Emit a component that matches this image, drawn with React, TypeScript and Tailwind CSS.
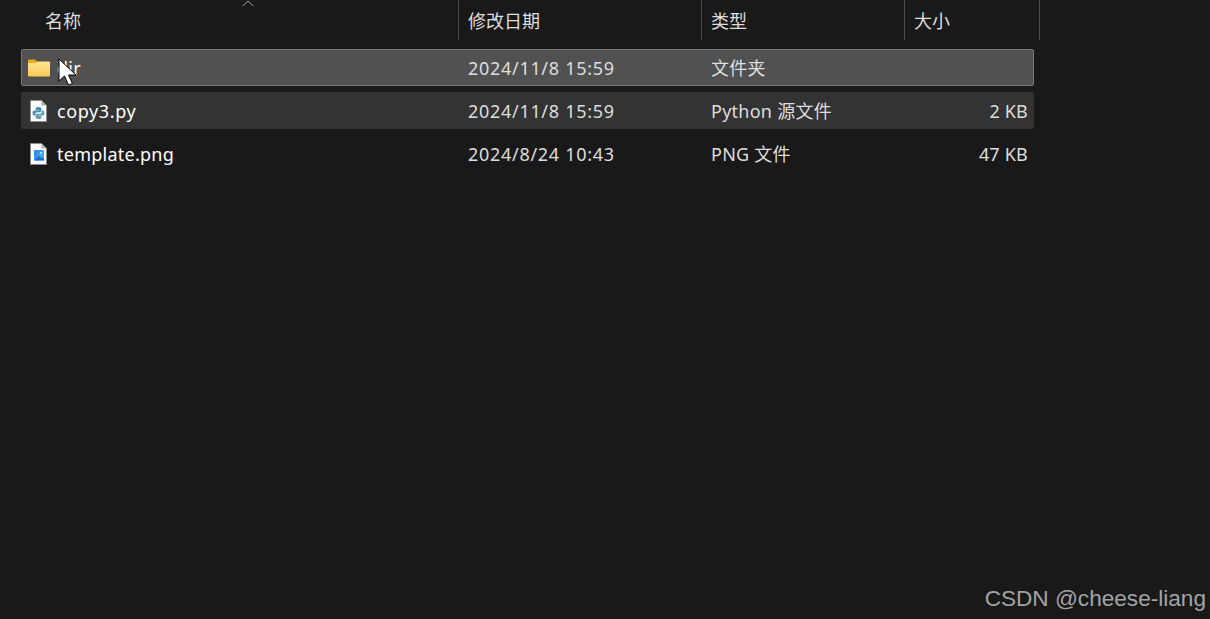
import React from "react";

const font = { fontFamily: '"Noto Sans", "Noto Sans CJK SC", sans-serif' };

function FolderIcon() {
  return (
    <svg width="22" height="18" viewBox="0 0 22 18" className="shrink-0">
      <defs>
        <linearGradient id="folderGrad" x1="0" y1="0" x2="0" y2="1">
          <stop offset="0" stopColor="#ffe69a" />
          <stop offset="1" stopColor="#fcc953" />
        </linearGradient>
      </defs>
      <path d="M0 1.5 Q0 0.5 1 0.5 H6 Q7 0.5 8 1.5 L9.5 2.5 H21 Q22 2.5 22 3.5 V8 H0 Z" fill="#f0a810" />
      <path d="M0 4 H7.5 L9.5 2.8 H21 Q22 2.8 22 3.8 V16.5 Q22 17.5 21 17.5 H1 Q0 17.5 0 16.5 Z" fill="url(#folderGrad)" />
    </svg>
  );
}

function PageIcon({ children }: { children: React.ReactNode }) {
  return (
    <svg width="17" height="22" viewBox="0 0 17 22" className="shrink-0">
      <path d="M0.5 0.5 H11.5 L16.5 5.5 V21.5 H0.5 Z" fill="#fbfbfb" stroke="#8c8c8c" strokeWidth="1" />
      <path d="M11.5 0.5 V5.5 H16.5 Z" fill="#b0b0b0" />
      {children}
    </svg>
  );
}

function PythonIcon() {
  return (
    <PageIcon>
      <path d="M8.4 7 C6.4 7 5.6 7.7 5.6 8.8 V10 H8.6 V10.6 H4.4 C3.2 10.6 2.6 11.6 2.6 13 C2.6 14.4 3.2 15.4 4.3 15.4 H5.3 V14 C5.3 12.9 6.2 12.2 7.2 12.2 H9.8 C10.8 12.2 11.4 11.5 11.4 10.6 V8.8 C11.4 7.7 10.4 7 8.4 7 Z" fill="#4f8cab" />
      <path d="M8.6 19 C10.6 19 11.4 18.3 11.4 17.2 V16 H8.4 V15.4 H12.6 C13.8 15.4 14.4 14.4 14.4 13 C14.4 11.6 13.8 10.6 12.7 10.6 H11.9 V12 C11.9 13.1 10.9 13.8 9.8 13.8 H7.2 C6.2 13.8 5.6 14.5 5.6 15.4 V17.2 C5.6 18.3 6.6 19 8.6 19 Z" fill="#5f9dbb" />
    </PageIcon>
  );
}

function PngIcon() {
  return (
    <PageIcon>
      <defs>
        <linearGradient id="pngGrad" x1="0" y1="0" x2="1" y2="1">
          <stop offset="0" stopColor="#2a7fe0" />
          <stop offset="1" stopColor="#56bdf7" />
        </linearGradient>
      </defs>
      <rect x="4" y="7" width="10" height="10.5" rx="0.8" fill="url(#pngGrad)" />
      <path d="M4 17.5 L8.5 12.5 L11 15 L12 14.2 L14 16 V17.5 Z" fill="#1a6fd0" />
      <circle cx="11" cy="9.8" r="1.1" fill="#cfeaff" />
    </PageIcon>
  );
}

function Cursor() {
  return (
    <svg width="22" height="30" viewBox="0 0 22 30" className="absolute left-[58px] top-[58px]">
      <path d="M1 1 V23 L6.5 18 L10.5 27 L14.5 25.5 L10.5 17 H18 Z" fill="#ffffff" stroke="#000000" strokeWidth="1" />
    </svg>
  );
}

const rows = [
  { icon: <FolderIcon />, name: "dir", date: "2024/11/8 15:59", type: "文件夹", size: "", bg: "bg-[#515151] border border-[#777777]", iconCls: "ml-[6px]", gap: "ml-[7px] tracking-[0.3px]", nameW: "w-[446px]", sizeP: "pr-[5px]" },
  { icon: <PythonIcon />, name: "copy3.py", date: "2024/11/8 15:59", type: "Python 源文件", size: "2 KB", bg: "bg-[#333333]", iconCls: "ml-[9px]", gap: "ml-[10px] tracking-[0.6px]", nameW: "w-[447px]", sizeP: "pr-[6px]" },
  { icon: <PngIcon />, name: "template.png", date: "2024/8/24 10:43", type: "PNG 文件", size: "47 KB", bg: "", iconCls: "ml-[9px]", gap: "ml-[10px] tracking-[0.25px]", nameW: "w-[447px]", sizeP: "pr-[6px]" },
];

export default function App() {
  return (
    <div className="relative h-[619px] w-[1210px] overflow-hidden bg-[#191919] text-[18px] text-[#dedede]" style={font}>
      <div className="flex h-10">
        <div className="relative flex w-[459px] items-center border-r border-[#4d4d4d] pl-[45px] pt-[2px]">
          名称
          <svg width="12" height="7" viewBox="0 0 12 7" className="absolute left-[242px] top-0">
            <path d="M0.5 6 L6 1 L11.5 6" fill="none" stroke="#9a9a9a" strokeWidth="1" />
          </svg>
        </div>
        <div className="flex w-[243px] items-center border-r border-[#4d4d4d] pl-[9px] pt-[2px]">修改日期</div>
        <div className="flex w-[203px] items-center border-r border-[#4d4d4d] pl-[9px] pt-[2px]">类型</div>
        <div className="flex w-[135px] items-center border-r border-[#4d4d4d] pl-[9px] pt-[2px]">大小</div>
      </div>
      <div className="ml-[21px] mt-[9px] flex w-[1013px] flex-col gap-[6px]">
        {rows.map((r) => (
          <div key={r.name} className={`flex h-[37px] items-center rounded-[2px] ${r.bg}`}>
            <div className={`flex items-center ${r.nameW}`}>
              <span className={`flex ${r.iconCls}`}>{r.icon}</span>
              <span className={`${r.gap} pt-[2px] text-white`}>{r.name}</span>
            </div>
            <div className="w-[243px] pt-[2px] tracking-[0.7px]">{r.date}</div>
            <div className="w-[200px] pt-[2px] tracking-[0.25px]">{r.type}</div>
            <div className={`flex-1 pt-[2px] text-right tracking-[0.2px] ${r.sizeP}`}>{r.size}</div>
          </div>
        ))}
      </div>
      <Cursor />
      <div className="absolute bottom-[3px] right-[4px] text-[22.6px] text-[#a3a3a3]" style={{ fontFamily: '"Liberation Sans", sans-serif' }}>
        CSDN @cheese-liang
      </div>
    </div>
  );
}
